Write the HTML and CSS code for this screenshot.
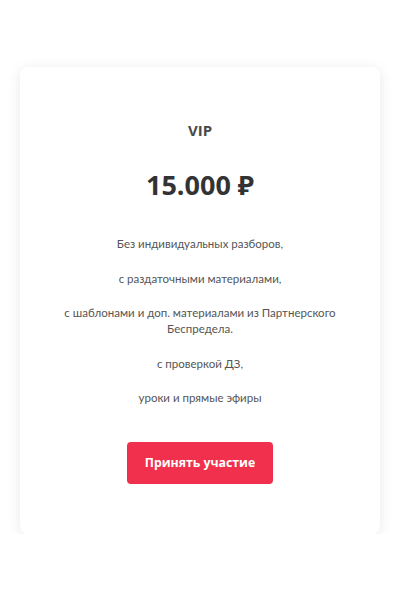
FILE: index.html
```html
<!DOCTYPE html>
<html lang="ru">
<head>
    <meta charset="UTF-8">
    <meta name="viewport" content="width=device-width, initial-scale=1.0">
    <title>VIP</title>
    <link rel="stylesheet" href="styles.css">
</head>
<body>
    <div class="card">
        <h2 class="plan">VIP</h2>
        <div class="price">15.000 ₽</div>
        <div class="features">
            <p>Без индивидуальных разборов,</p>
            <p>с раздаточными материалами,</p>
            <p>с шаблонами и доп. материалами из Партнерского Беспредела.</p>
            <p>с проверкой ДЗ,</p>
            <p>уроки и прямые эфиры</p>
        </div>
        <button class="join">Принять участие</button>
    </div>
</body>
</html>
```

FILE: styles.css
```css
body {
    margin: 0;
    background: #fff;
    font-family: "Open Sans", "Noto Sans", sans-serif;
    color: #444;
}
.card {
    margin: 67px 20px 0;
    height: 467px;
    box-sizing: border-box;
    background: #fff;
    border-radius: 8px;
    box-shadow: 0 2px 14px rgba(0, 0, 0, 0.09);
    text-align: center;
    padding: 53px 30px 0;
    display: flex;
    flex-direction: column;
    align-items: center;
}
.plan {
    margin: 0;
    font-size: 15px;
    font-weight: 700;
    line-height: 20px;
    color: #4a4a4a;
}
.price {
    margin-top: 28px;
    font-size: 27px;
    font-weight: 700;
    line-height: 34px;
    color: #333;
}
.features {
    margin-top: 34px;
    width: 290px;
}
.features p {
    margin: 0 0 18.5px;
    font-family: Lato, "Open Sans", sans-serif;
    font-size: 11.5px;
    line-height: 16px;
    color: #555;
}
.join {
    margin-top: 17px;
    width: 146px;
    height: 42px;
    border: none;
    border-radius: 4px;
    background: #f0304c;
    color: #fff;
    font-family: inherit;
    font-size: 12.3px;
    font-weight: 700;
    cursor: pointer;
}
```
